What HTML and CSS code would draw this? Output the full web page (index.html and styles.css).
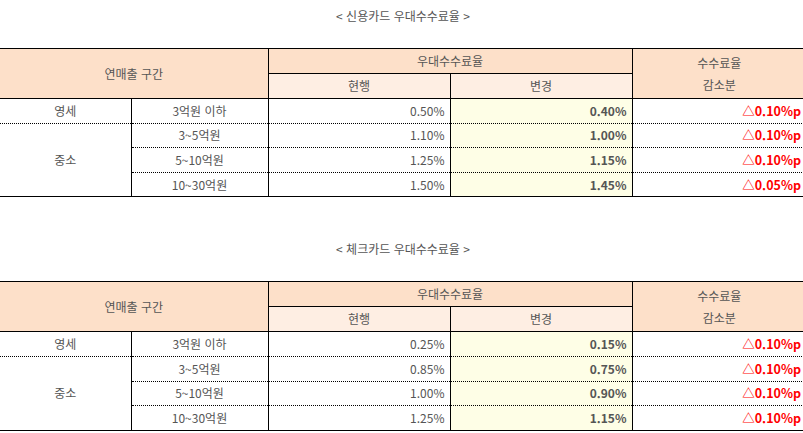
FILE: index.html
```html
<!DOCTYPE html>
<html lang="ko">
<head>
<meta charset="utf-8">
<title>우대수수료율</title>
<link rel="stylesheet" href="styles.css">
</head>
<body>
<section class="block first">
  <p class="caption">&lt; 신용카드 우대수수료율 &gt;</p>
  <table class="rates">
    <colgroup>
      <col class="c1"><col class="c2"><col class="c3"><col class="c4"><col class="c5">
    </colgroup>
    <thead>
      <tr class="h1">
        <th colspan="2" rowspan="2">연매출 구간</th>
        <th colspan="2">우대수수료율</th>
        <th rowspan="2" class="two">수수료율<br>감소분</th>
      </tr>
      <tr class="h2">
        <th>현행</th>
        <th class="sub-right">변경</th>
      </tr>
    </thead>
    <tbody>
      <tr>
        <td class="grp">영세</td>
        <td class="range">3억원 이하</td>
        <td class="cur">0.50%</td>
        <td class="new">0.40%</td>
        <td class="diff">△0.10%p</td>
      </tr>
      <tr>
        <td class="grp" rowspan="3">중소</td>
        <td class="range">3~5억원</td>
        <td class="cur">1.10%</td>
        <td class="new">1.00%</td>
        <td class="diff">△0.10%p</td>
      </tr>
      <tr>
        <td class="range">5~10억원</td>
        <td class="cur">1.25%</td>
        <td class="new">1.15%</td>
        <td class="diff">△0.10%p</td>
      </tr>
      <tr>
        <td class="range">10~30억원</td>
        <td class="cur">1.50%</td>
        <td class="new">1.45%</td>
        <td class="diff">△0.05%p</td>
      </tr>
    </tbody>
  </table>
</section>

<section class="block second">
  <p class="caption">&lt; 체크카드 우대수수료율 &gt;</p>
  <table class="rates">
    <colgroup>
      <col class="c1"><col class="c2"><col class="c3"><col class="c4"><col class="c5">
    </colgroup>
    <thead>
      <tr class="h1">
        <th colspan="2" rowspan="2">연매출 구간</th>
        <th colspan="2">우대수수료율</th>
        <th rowspan="2" class="two">수수료율<br>감소분</th>
      </tr>
      <tr class="h2">
        <th>현행</th>
        <th class="sub-right">변경</th>
      </tr>
    </thead>
    <tbody>
      <tr>
        <td class="grp">영세</td>
        <td class="range">3억원 이하</td>
        <td class="cur">0.25%</td>
        <td class="new">0.15%</td>
        <td class="diff">△0.10%p</td>
      </tr>
      <tr>
        <td class="grp" rowspan="3">중소</td>
        <td class="range">3~5억원</td>
        <td class="cur">0.85%</td>
        <td class="new">0.75%</td>
        <td class="diff">△0.10%p</td>
      </tr>
      <tr>
        <td class="range">5~10억원</td>
        <td class="cur">1.00%</td>
        <td class="new">0.90%</td>
        <td class="diff">△0.10%p</td>
      </tr>
      <tr>
        <td class="range">10~30억원</td>
        <td class="cur">1.25%</td>
        <td class="new">1.15%</td>
        <td class="diff">△0.10%p</td>
      </tr>
    </tbody>
  </table>
</section>
</body>
</html>
```

FILE: styles.css
```css
html {
  overflow: hidden;
  background: #fff;
}
body {
  margin: 0;
  width: 806px;
  font-family: "Noto Sans CJK KR", "Noto Sans", sans-serif;
  font-size: 12px;
  color: #555;
}
.block.first {
  padding-top: 6px;
}
.block.second {
  padding-top: 42px;
}
.caption {
  margin: 0;
  height: 20px;
  line-height: 20px;
  text-align: center;
  font-size: 12px;
  color: #555;
}
.rates {
  margin-top: 22px;
  width: 806px;
  border-collapse: collapse;
  table-layout: fixed;
  border-top: 1px solid #000;
  border-bottom: 1px solid #000;
}
.c1 { width: 131px; }
.c2 { width: 137px; }
.c3 { width: 182px; }
.c4 { width: 182px; }
.c5 { width: 174px; }

.rates tr.h1,
.rates tr.h2 {
  height: 25px;
}
.rates tbody tr {
  height: 24.6px;
}

.rates th,
.rates td {
  padding: 0 5px;
  line-height: 16px;
  white-space: nowrap;
}
.rates th {
  font-weight: normal;
  text-align: center;
  background: #fde0c9;
  border-left: 1px solid #000;
}
.rates th:first-child {
  border-left: none;
}
.rates tr.h1 th {
  border-bottom: 1px solid #000;
}
.rates .h2 th {
  background: #feeee3;
  border-top: 1px solid #000;
  border-left: 1px solid #000;
  border-bottom: 1px solid #000;
}
.rates th.two {
  line-height: 22px;
  vertical-align: middle;
}

.rates td {
  border-left: 1px solid #000;
  border-top: 1px dotted #000;
}
.rates tbody tr:first-child td {
  border-top: 1px solid #000;
}
.rates td.grp {
  border-left: none;
  text-align: center;
}
.rates td.range {
  text-align: center;
}
.rates td.cur {
  text-align: right;
}
.rates td.new {
  text-align: right;
  font-weight: bold;
  background: #fefee6;
}
.rates td.diff {
  text-align: right;
  font-weight: bold;
  color: #ff0000;
  font-size: 12.5px;
}
```
